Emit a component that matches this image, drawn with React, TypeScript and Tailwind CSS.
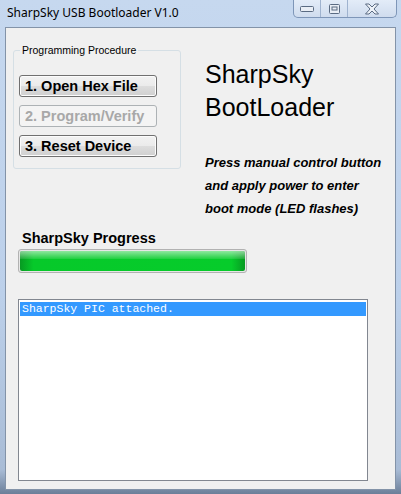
import React from 'react';

const ARIAL = "font-['Liberation_Sans',Arial,sans-serif]";

const btnBase =
    'w-[138px] h-[22px] rounded-[3px] border text-left pl-[5px] text-[14.5px] font-bold leading-none';

const WinButton: React.FC<{ label: string; disabled?: boolean }> = ({ label, disabled }) => (
    <button
        disabled={disabled}
        className={
            disabled
                ? `${btnBase} border-[#adb2b5] bg-[#f4f4f4] text-[#a8a8a8]`
                : `${btnBase} border-[#707070] bg-[linear-gradient(#f2f2f2_0%,#ebebeb_48%,#dddddd_52%,#cfcfcf_100%)] text-black shadow-[inset_0_0_0_1px_#fcfcfc]`
        }
    >
        {label}
    </button>
);

const CaptionButtons = () => (
    <div className="flex h-[18px] mr-[4px] border border-t-0 border-[#7e96b8] rounded-b-[5px] overflow-hidden bg-[linear-gradient(#e3ecf8,#cfdcee)]">
        <div className="w-[27px] flex items-center justify-center border-r border-[#9fb3cf]">
            <svg width="14" height="6" viewBox="0 0 14 6">
                <rect x="0.5" y="0.5" width="13" height="5" rx="1" fill="#e9eef5" stroke="#5a6b82" />
            </svg>
        </div>
        <div className="w-[27px] flex items-center justify-center border-r border-[#9fb3cf]">
            <svg width="11" height="10" viewBox="0 0 11 10">
                <rect x="0.5" y="0.5" width="10" height="9" rx="1" fill="#e9eef5" stroke="#5a6b82" />
                <rect x="3" y="3" width="5" height="3" fill="none" stroke="#5a6b82" />
            </svg>
        </div>
        <div className="w-[48px] flex items-center justify-center">
            <svg width="16" height="12" viewBox="0 0 16 12">
                <path
                    d="M1.5 1 L5 1 L8 4 L11 1 L14.5 1 L10 6 L14.5 11 L11 11 L8 8 L5 11 L1.5 11 L6 6 Z"
                    fill="#eef2f8"
                    stroke="#5a6b82"
                    strokeLinejoin="round"
                />
            </svg>
        </div>
    </div>
);

export default function App() {
    return (
        <div className="w-[401px] h-[494px] flex flex-col bg-[linear-gradient(#c6d8ef_0%,#bcd0ea_60%,#a9bcd6_95%,#6c7f99_100%)] overflow-hidden">
            {/* title bar */}
            <div className="h-[27px] flex items-start justify-between shrink-0">
                <span className="pl-[7px] pt-[5px] text-[12px] leading-[16px] text-black font-['Noto_Sans',sans-serif]">
                    SharpSky USB Bootloader V1.0
                </span>
                <CaptionButtons />
            </div>

            {/* client area */}
            <div className={`ml-[5px] w-[391px] h-[463px] bg-[#f0f0f0] border border-[#8393a8] ${ARIAL}`}>
                <div className="flex h-[192px]">
                    <fieldset className="ml-[7px] mt-[22px] w-[168px] h-[119px] border border-[#d5dfe5] rounded-[3px] relative">
                        <span className="absolute -top-[8px] left-[6px] px-[2px] bg-[#f0f0f0] text-[10.5px] leading-[14px] text-black">
                            Programming Procedure
                        </span>
                        <div className="flex flex-col gap-[8px] ml-[5px] mt-[24px]">
                            <WinButton label="1. Open Hex File" />
                            <WinButton label="2. Program/Verify" disabled />
                            <WinButton label="3. Reset Device" />
                        </div>
                    </fieldset>
                    <div className="ml-[24px] flex flex-col">
                        <div className="mt-[30px] text-[25px] leading-[33px] text-black">
                            <div>SharpSky</div>
                            <div>BootLoader</div>
                        </div>
                        <div className="mt-[27px] text-[13px] leading-[23px] font-bold italic text-black">
                            <div>Press manual control button</div>
                            <div>and apply power to enter</div>
                            <div>boot mode (LED flashes)</div>
                        </div>
                    </div>
                </div>

                <div className="ml-[16px] mt-[10px] text-[14.5px] leading-[17px] font-bold text-black">
                    SharpSky Progress
                </div>
                <div className="ml-[12px] mt-[2px] w-[229px] h-[24px] rounded-[3px] border border-[#b2b2b2] p-[1px] bg-[#e6e6e6]">
                    <div className="w-full h-full rounded-[2px] bg-[linear-gradient(90deg,#079a22_0%,#06c92a_6%,#06cc2b_94%,#079a22_100%)] relative overflow-hidden">
                        <div className="h-[8px] bg-[linear-gradient(rgba(255,255,255,0.55),rgba(255,255,255,0.1))]" />
                    </div>
                </div>

                <div className="ml-[12px] mt-[26px] w-[350px] h-[182px] bg-white border border-[#828790] p-[1px]">
                    <div className="mt-[1px] h-[14px] bg-[#3399ff] text-white pl-[2px] text-[11.5px] leading-[14px] font-['Liberation_Mono','Courier_New',monospace]">
                        SharpSky PIC attached.
                    </div>
                </div>
            </div>
        </div>
    );
}
